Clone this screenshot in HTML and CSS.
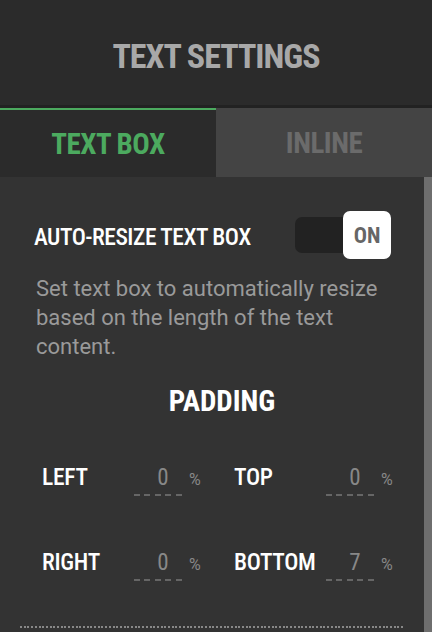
FILE: index.html
```html
<!DOCTYPE html>
<html lang="en">
<head>
    <meta charset="UTF-8">
    <meta name="viewport" content="width=device-width, initial-scale=1.0">
    <title>Text Settings</title>
    <link rel="stylesheet" href="styles.css">
</head>
<body>

    <header class="panel-header">TEXT SETTINGS</header>

    <nav class="tabs">
        <div class="tab active">TEXT BOX</div>
        <div class="tab">INLINE</div>
    </nav>

    <div class="panel-body">
        <div class="content">
            <div class="option-row">
                <div class="option-label">AUTO-RESIZE TEXT BOX</div>
                <div class="toggle">
                    <div class="toggle-knob">ON</div>
                </div>
            </div>
            <p class="option-desc">Set text box to automatically resize based on the length of the text content.</p>

            <div class="section-title">PADDING</div>

            <div class="padding-grid">
                <div class="pad-field">
                    <span class="pad-label">LEFT</span>
                    <span class="pad-input">0</span>
                    <span class="pad-unit">%</span>
                </div>
                <div class="pad-field">
                    <span class="pad-label">TOP</span>
                    <span class="pad-input">0</span>
                    <span class="pad-unit">%</span>
                </div>
                <div class="pad-field">
                    <span class="pad-label">RIGHT</span>
                    <span class="pad-input">0</span>
                    <span class="pad-unit">%</span>
                </div>
                <div class="pad-field">
                    <span class="pad-label">BOTTOM</span>
                    <span class="pad-input">7</span>
                    <span class="pad-unit">%</span>
                </div>
            </div>

            <div class="divider"></div>
        </div>
        <div class="scrollbar"></div>
    </div>

</body>
</html>
```

FILE: styles.css
```css
* { box-sizing: border-box; }
html, body { height: 100%; }
body {
    margin: 0; background: #333; color: #fff;
    font-family: Roboto, 'DejaVu Sans Condensed', sans-serif;
    font-stretch: 75%;
    display: flex; flex-direction: column; overflow: hidden;
}

/* HEADER */
.panel-header {
    flex: 0 0 108px; background: #2b2b2b; border-bottom: 3px solid #222;
    display: flex; align-items: center; justify-content: center;
    padding-top: 7px;
    font-size: 34px; font-weight: bold; color: #a8a8a8; letter-spacing: -1px;
}

/* ABAS */
.tabs { display: flex; flex: 0 0 69px; }
.tab {
    flex: 1; display: flex; align-items: center; justify-content: center;
    font-size: 29px; font-weight: bold; background: #444; color: #6b6b6b;
    letter-spacing: -0.5px;
}
.tab.active { flex: 0 0 216px; background: #2b2b2b; color: #4caa5f; border-top: 2px solid #4caa5f; }

/* CORPO */
.panel-body { flex: 1; display: flex; min-height: 0; }
.content { flex: 1; min-width: 0; padding: 34px 33px 0 34px; }
.scrollbar { flex: 0 0 8px; background: #6e6e6e; }

.option-row { display: flex; align-items: center; justify-content: space-between; height: 48px; }
.option-label { font-size: 23.5px; font-weight: 500; padding-top: 3px; letter-spacing: -0.5px; }

.toggle {
    flex: 0 0 96px; height: 36px; background: #222; border-radius: 7px;
    display: flex; justify-content: flex-end; align-items: center;
}
.toggle-knob {
    width: 48px; height: 48px; background: #fff; border-radius: 7px;
    display: flex; align-items: center; justify-content: center;
    font-size: 22px; font-weight: bold; color: #666;
}

.option-desc {
    margin: 15px 0 0 2px; font-size: 22px; line-height: 29px; color: #9a9a9a;
    font-stretch: 96%;
}

.section-title {
    margin-top: 23px; padding-left: 19px; text-align: center; line-height: 34px;
    font-size: 29px; font-weight: bold;
}

/* GRADE DE PADDING */
.padding-grid {
    display: grid; grid-template-columns: 192px 1fr;
    row-gap: 51px; margin: 44px 0 0 8px;
}
.pad-field { display: flex; align-items: baseline; }
.pad-label { width: 92px; font-size: 23.5px; font-weight: 500; line-height: 30px; letter-spacing: -0.3px; }
.pad-input {
    width: 48px; text-align: center; padding: 0 0 3px 10px;
    font-size: 23px; color: #888; line-height: 30px;
    background: repeating-linear-gradient(to right, #666 0 6px, transparent 6px 10.5px) left bottom / 100% 2px no-repeat;
}
.pad-unit { margin-left: 7px; font-size: 16px; font-stretch: 100%; color: #888; }

.divider {
    margin: 45px 0 0 -14px; width: 384px; height: 2px;
    background: repeating-linear-gradient(to right, #888 0 2px, transparent 2px 3.7px);
}
```
